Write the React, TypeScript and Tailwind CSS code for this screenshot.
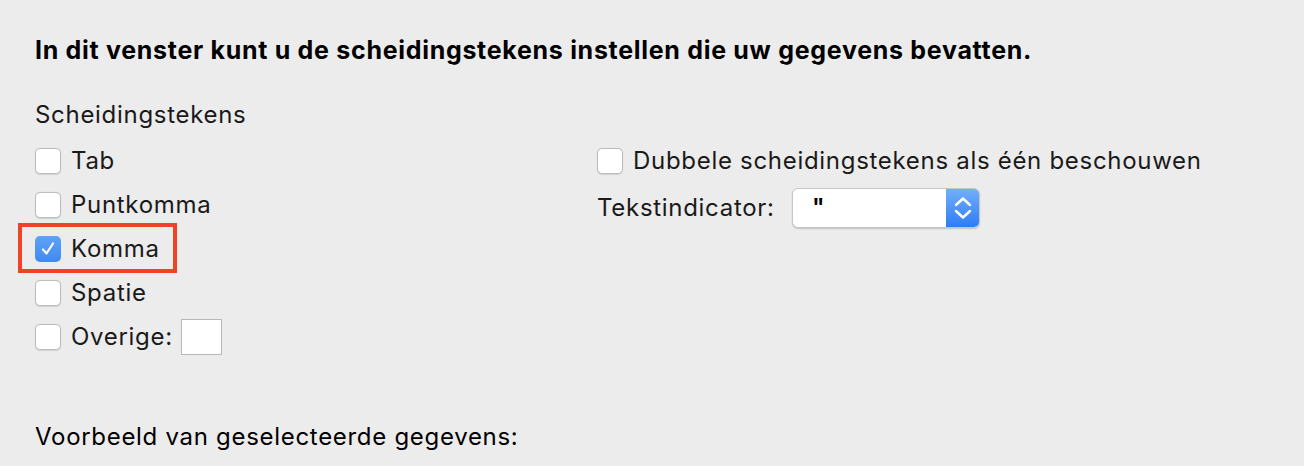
import React from "react";

function Box({ checked = false }: { checked?: boolean }) {
  if (checked) {
    return (
      <div className="w-[26px] h-[26px] rounded-[5px] bg-gradient-to-b from-[#5ea2f7] to-[#3f8af2] flex items-center justify-center shrink-0">
        <svg width="18" height="18" viewBox="0 0 18 18">
          <path d="M4 9.5 L7.5 13.5 L14 3.5" fill="none" stroke="white" strokeWidth="2.2" strokeLinecap="round" strokeLinejoin="round" />
        </svg>
      </div>
    );
  }
  return (
    <div className="w-[26px] h-[26px] rounded-[5px] bg-white border border-[#bdbdbd] shadow-[0_0.5px_1px_rgba(0,0,0,0.12)] shrink-0" />
  );
}

function Row({ label, checked, children }: { label: string; checked?: boolean; children?: React.ReactNode }) {
  return (
    <div className="h-[44px] flex items-center gap-[10px]">
      <Box checked={checked} />
      <span>{label}</span>
      {children}
    </div>
  );
}

export default function App() {
  return (
    <div
      className="w-[1304px] h-[466px] bg-[#ececec] pl-[35px] text-[#1a1a1a] text-[24px] tracking-[0.7px] overflow-hidden"
      style={{ fontFamily: 'Inter, "Noto Sans", sans-serif' }}
    >
      <div className="pt-[34px] h-[68px] leading-[32px] text-[25px] tracking-[0.7px] font-bold text-black whitespace-nowrap">
        In dit venster kunt u de scheidingstekens instellen die uw gegevens bevatten.
      </div>
      <div className="h-[71px] pt-[31px] leading-[32px]">Scheidingstekens</div>
      <div className="grid grid-cols-[562px_1fr]">
        <div className="flex flex-col">
          <Row label="Tab" />
          <Row label="Puntkomma" />
          <div className="relative">
            <Row label="Komma" checked />
            <div className="absolute left-[-17px] top-[-4px] w-[159px] h-[50px] border-[4px] border-[#ee4325]" />
          </div>
          <Row label="Spatie" />
          <Row label="Overige:">
            <div className="w-[41px] h-[36px] bg-white border border-[#b8b8b8] -ml-[2px]" />
          </Row>
        </div>
        <div className="flex flex-col">
          <Row label="Dubbele scheidingstekens als één beschouwen" />
          <div className="h-[50px] flex items-center">
            <span className="w-[195px]">Tekstindicator:</span>
            <div className="w-[188px] h-[40px] rounded-[6px] bg-white border border-[#c6c6c6] shadow-[0_1px_1.5px_rgba(0,0,0,0.18)] flex overflow-hidden">
              <div className="flex-1 pl-[19px] leading-[38px] font-semibold text-black">"</div>
              <div className="w-[33px] h-full bg-gradient-to-b from-[#72aefa] to-[#2c7cf5] flex items-center justify-center">
                <svg width="20" height="30" viewBox="0 0 20 30">
                  <path d="M3 12 L10 5.5 L17 12" fill="none" stroke="white" strokeWidth="2.4" strokeLinecap="round" strokeLinejoin="round" />
                  <path d="M3 18 L10 24.5 L17 18" fill="none" stroke="white" strokeWidth="2.4" strokeLinecap="round" strokeLinejoin="round" />
                </svg>
              </div>
            </div>
          </div>
        </div>
      </div>
      <div className="pt-[62px] leading-[32px] text-black">Voorbeeld van geselecteerde gegevens:</div>
    </div>
  );
}
